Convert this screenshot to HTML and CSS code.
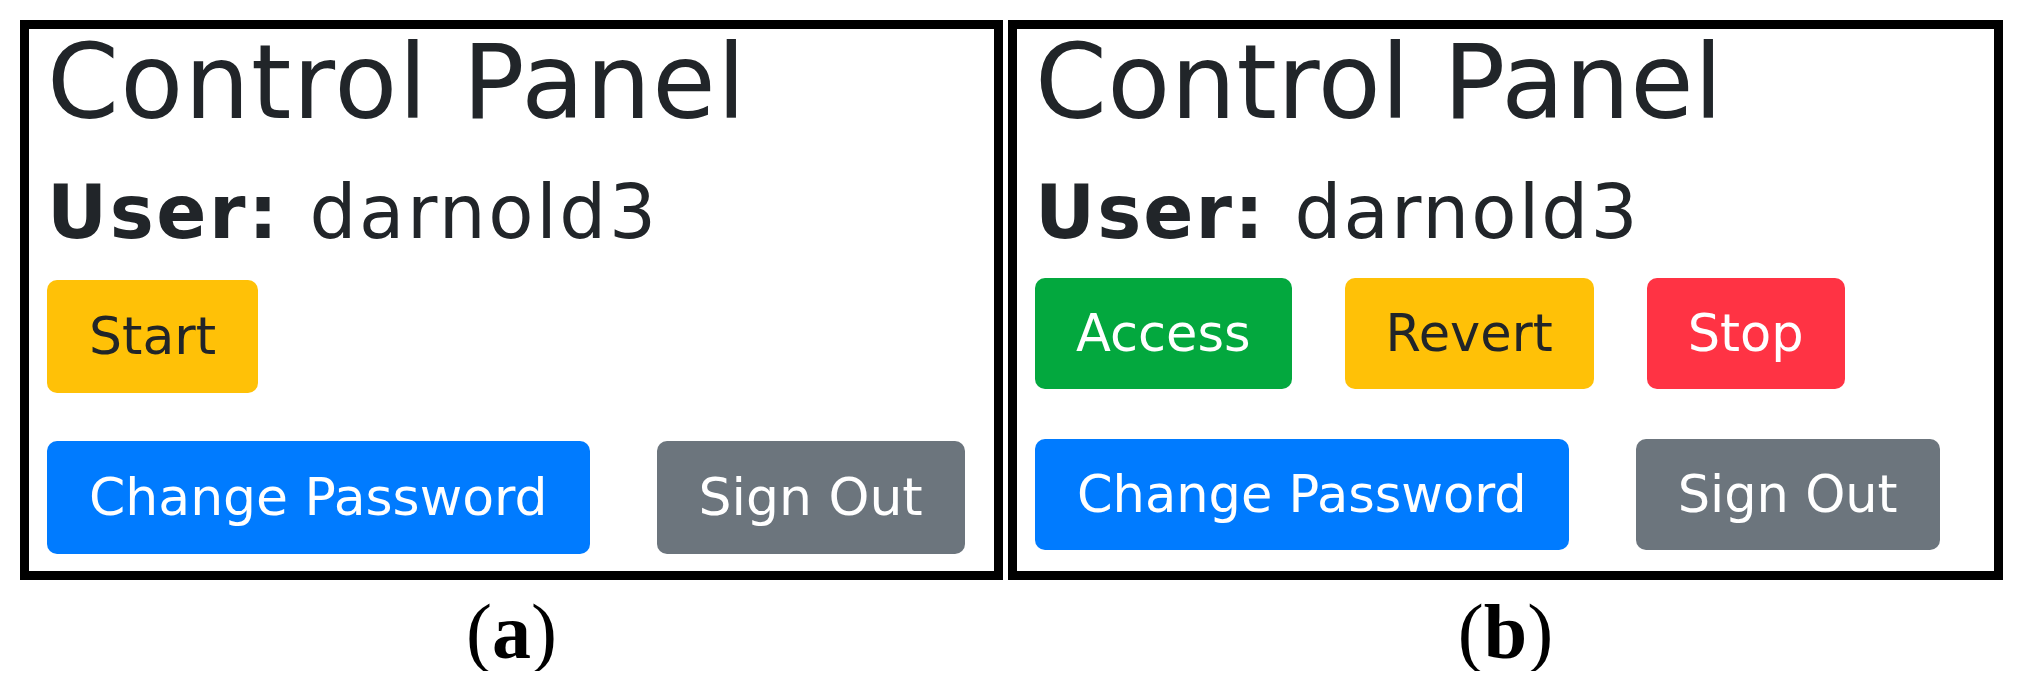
FILE: index.html
```html
<!DOCTYPE html>
<html lang="en">
<head>
    <meta charset="UTF-8">
    <meta name="viewport" content="width=device-width, initial-scale=1.0">
    <title>Control Panel</title>
    <link rel="stylesheet" href="styles.css">
</head>
<body>
    <div class="figure">
        <div class="col col-a">
            <div class="panel">
                <h1 class="title">Control Panel</h1>
                <h3 class="user"><b>User:</b> darnold3</h3>
                <div class="row actions">
                    <button class="btn btn-warning">Start</button>
                </div>
                <div class="row account">
                    <button class="btn btn-primary">Change Password</button>
                    <button class="btn btn-secondary">Sign Out</button>
                </div>
            </div>
            <div class="caption">(<b>a</b>)</div>
        </div>

        <div class="col col-b">
            <div class="panel">
                <h1 class="title">Control Panel</h1>
                <h3 class="user"><b>User:</b> darnold3</h3>
                <div class="row actions">
                    <button class="btn btn-success">Access</button>
                    <button class="btn btn-warning">Revert</button>
                    <button class="btn btn-danger">Stop</button>
                </div>
                <div class="row account">
                    <button class="btn btn-primary">Change Password</button>
                    <button class="btn btn-secondary">Sign Out</button>
                </div>
            </div>
            <div class="caption">(<b>b</b>)</div>
        </div>
    </div>
</body>
</html>
```

FILE: styles.css
```css
body {
    margin: 0;
    background-color: #fff;
    font-family: "DejaVu Sans", Verdana, sans-serif;
    color: #212529;
}
.figure {
    display: flex;
    gap: 5px;
    padding: 20px 0 0 20px;
}
.col-a {
    width: 983px;
}
.col-b {
    width: 995px;
}
.panel {
    box-sizing: border-box;
    height: 560px;
    border: 9px solid #000;
    padding: 2px 18px 0 18px;
}
.title {
    margin: 0;
    font-size: 103px;
    line-height: 103px;
    font-weight: normal;
    letter-spacing: 1.3px;
}
.user {
    margin: 41px 0 0 0;
    font-size: 74px;
    line-height: 74px;
    font-weight: normal;
    letter-spacing: 2.6px;
    word-spacing: 3px;
}
.user b {
    font-weight: bold;
}
.row {
    display: flex;
}
.actions {
    margin-top: 31px;
    gap: 53px;
}
.account {
    margin-top: 48px;
    gap: 67px;
}
.btn {
    font-family: "DejaVu Sans", Verdana, sans-serif;
    font-size: 51px;
    line-height: 75px;
    padding: 19px 42px;
    border: none;
    border-radius: 10px;
    color: #fff;
    cursor: pointer;
}
.col-a .btn {
    font-size: 52px;
}
.col-b .title {
    letter-spacing: 0.4px;
}
.col-b .user {
    letter-spacing: 2.1px;
}
.col-b .btn {
    padding-top: 18px;
    padding-bottom: 18px;
}
.col-b .actions {
    margin-top: 29px;
}
.col-b .actions .btn {
    padding-left: 41px;
    padding-right: 41px;
}
.col-b .account {
    margin-top: 50px;
}
.btn-warning {
    background-color: #ffc107;
    color: #212529;
}
.btn-primary {
    background-color: #007bff;
}
.btn-secondary {
    background-color: #6c757d;
}
.btn-success {
    background-color: #03a83e;
}
.btn-danger {
    background-color: #ff3344;
}
.caption {
    margin-top: 13px;
    text-align: center;
    font-family: "Liberation Serif", "Times New Roman", serif;
    font-size: 78px;
    line-height: 78px;
    color: #000;
}
```
